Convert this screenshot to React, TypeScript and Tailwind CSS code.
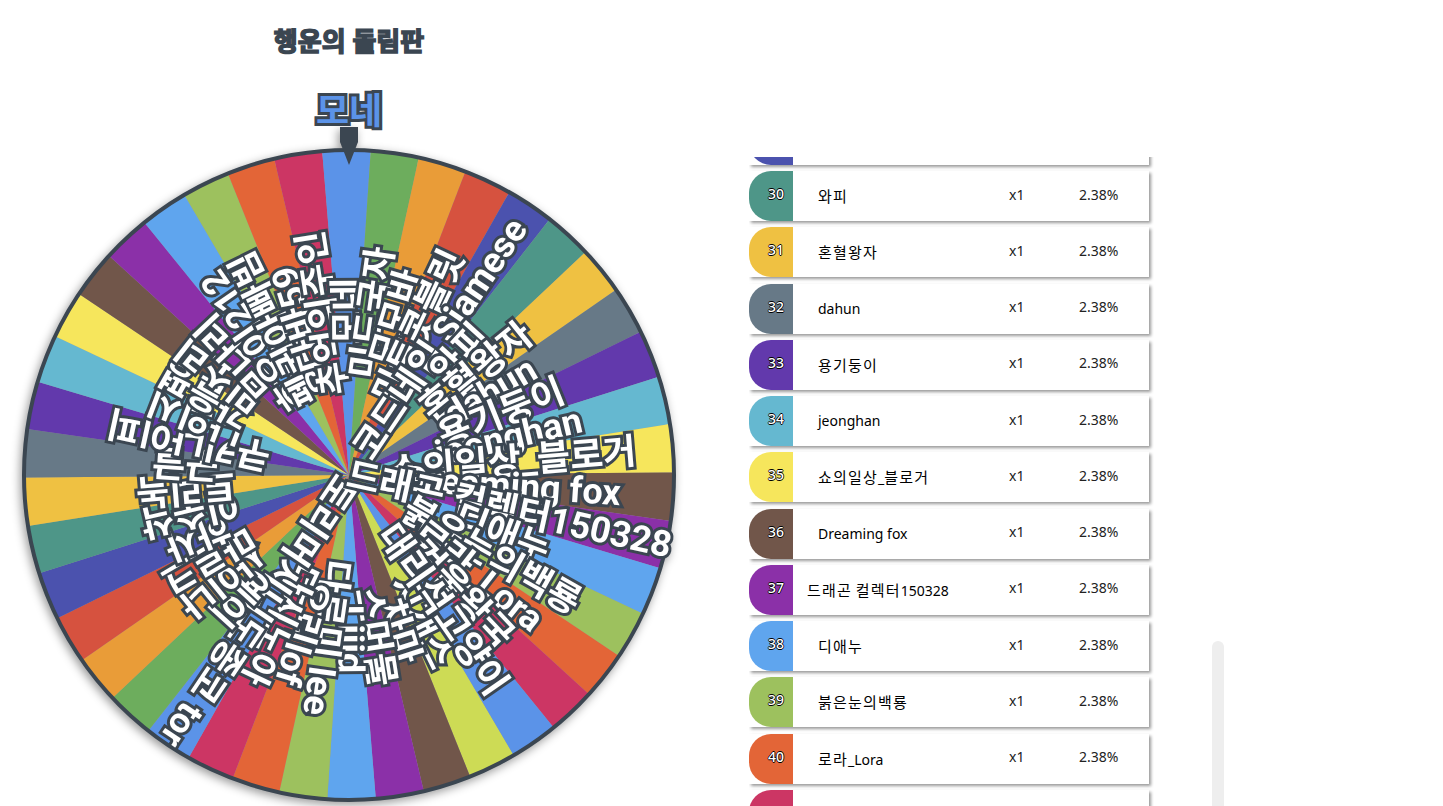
import type { ReactNode } from 'react'

// 42 slices, index 0 is entry #1. Name list doubles as the wheel labels.
const ENTRIES: { name: string; color: string }[] = [
  { name: '지개스', color: '#cddb55' },
  { name: '차마', color: '#71564a' },
  { name: '스머물', color: '#8b30a8' },
  { name: 'Liiid', color: '#5fa5ee' },
  { name: '다르미 lee', color: '#9dc15e' },
  { name: '오리lof', color: '#e36537' },
  { name: '다시노아', color: '#cc3664' },
  { name: '토리머시니도종코 tor', color: '#5b93e8' },
  { name: '예이', color: '#6dad5d' },
  { name: '사이나', color: '#e99c38' },
  { name: '마르크', color: '#d6523f' },
  { name: '하사', color: '#4b52ae' },
  { name: '이수삭', color: '#4e9688' },
  { name: '트리녹', color: '#efc142' },
  { name: '구글', color: '#677987' },
  { name: '쿠키나이피', color: '#6239ac' },
  { name: '나의시', color: '#65b8d0' },
  { name: '가을평', color: '#f6e65c' },
  { name: '민소리', color: '#71564a' },
  { name: '모나리', color: '#8b30a8' },
  { name: '호요이212', color: '#5fa5ee' },
  { name: '펭귄아빠빔', color: '#9dc15e' },
  { name: '다바59', color: '#e36537' },
  { name: '추억의주인', color: '#cc3664' },
  { name: '모네', color: '#5b93e8' },
  { name: '미드국자', color: '#6dad5d' },
  { name: '모모바', color: '#e99c38' },
  { name: '민트콧블릿', color: '#d6523f' },
  { name: '코드네임 Siamese', color: '#4b52ae' },
  { name: '와피', color: '#4e9688' },
  { name: '혼혈왕자', color: '#efc142' },
  { name: 'dahun', color: '#677987' },
  { name: '용기둥이', color: '#6239ac' },
  { name: 'jeonghan', color: '#65b8d0' },
  { name: '쇼의일상_블로거', color: '#f6e65c' },
  { name: 'Dreaming fox', color: '#71564a' },
  { name: '드래곤 컬렉터150328', color: '#8b30a8' },
  { name: '디애누', color: '#5fa5ee' },
  { name: '붉은눈의백룡', color: '#9dc15e' },
  { name: '로라_Lora', color: '#e36537' },
  { name: '겨울왕국', color: '#cc3664' },
  { name: '대리석고양이', color: '#5b93e8' },
]

const CX = 349
const CY = 333
const R = 325
const STEP = 360 / ENTRIES.length
const INK = '#3b4651'

// slice #25 sits under the pointer, nudged a little counter-clockwise
const sliceAngle = (i: number) => -90.45 + (i - 24) * STEP

function polar(angle: number, r: number) {
  const rad = (angle * Math.PI) / 180
  return `${CX + r * Math.cos(rad)} ${CY + r * Math.sin(rad)}`
}

function Wheel() {
  return (
    <svg width={698} height={664} className="block overflow-visible drop-shadow-[-2px_3px_5px_rgba(0,0,0,0.4)]">
      {ENTRIES.map((e, i) => {
        const a = sliceAngle(i)
        return (
          <path
            key={i}
            d={`M${CX} ${CY}L${polar(a - STEP / 2, R)}A${R} ${R} 0 0 1 ${polar(a + STEP / 2, R)}Z`}
            fill={e.color}
          />
        )
      })}
      <circle cx={CX} cy={CY} r={R} fill="none" stroke={INK} strokeWidth={4} />
      {ENTRIES.map((e, i) => (
        <text
          key={i}
          transform={`translate(${CX} ${CY}) rotate(${sliceAngle(i)})`}
          x={164}
          textAnchor="middle"
          dominantBaseline="central"
          fill="#ffffff"
          stroke={INK}
          strokeWidth={6}
          paintOrder="stroke"
          fontSize={36}
          fontWeight={700}
          fontFamily="Roboto, 'Noto Sans CJK KR', sans-serif"
        >
          {e.name}
        </text>
      ))}
      {/* pointer */}
      <polygon points="340,-15 358,-15 358,0 349,23 340,0" fill={INK} />
    </svg>
  )
}

// Hangul runs in the reference are wider than the latin next to them
function splitName(name: string): ReactNode[] {
  return name.split(/([\uac00-\ud7a3]+)/).map((part, i) =>
    /[\uac00-\ud7a3]/.test(part) ? (
      <span key={i} className="text-[15px] tracking-[1.2px]">
        {part}
      </span>
    ) : (
      <span key={i}>{part}</span>
    ),
  )
}

function Row({ no, name, color }: { no: number; name: string; color: string }) {
  return (
    <div className="mb-[6.27px] grid h-[50px] w-[400px] grid-cols-[44px_216px_70px_70px] bg-white text-sm text-[#222] shadow-[2px_2px_3px_#999]">
      <div
        className="rounded-l-[22px] pl-[19px] pt-[13px] font-medium leading-5 text-white [text-shadow:0.7px_0_#000,-0.7px_0_#000,0_0.7px_#000,0_-0.7px_#000]"
        style={{ backgroundColor: color }}
      >
        {no}
      </div>
      <div className={`whitespace-nowrap pt-[15px] leading-5 text-black ${no === 37 ? 'pl-[14px]' : 'pl-[25px]'}`}>
        {splitName(name)}
      </div>
      <div className="pt-[13.5px] leading-5">x1</div>
      <div className="pt-[13.5px] leading-5">2.38%</div>
    </div>
  )
}

export default function App() {
  return (
    <div className="flex h-[806px] w-[1443px] overflow-hidden bg-white font-['Noto_Sans','Noto_Sans_CJK_KR',sans-serif]">
      {/* Wheel column */}
      <div className="flex w-[698px] shrink-0 flex-col items-center">
        <h1 className="mt-6 h-[34px] text-[26px] font-bold leading-[34px] text-[#3b4651] [-webkit-text-stroke:1.5px_#3b4651]">
          행운의 돌림판
        </h1>
        <div className="mt-[29px] h-[55px] text-[36px] font-bold leading-[48px] text-[#5b93e8] [-webkit-text-stroke:6px_#3b4651] [paint-order:stroke]">
          모네
        </div>
        <Wheel />
      </div>

      {/* Result list, scrolled part way down */}
      <div className="relative flex-1 pt-[157px]">
        <div className="ml-[51px] h-[649px] w-[405px] overflow-hidden">
          <div className="-mt-[42.27px]">
            {ENTRIES.slice(28, 41).map((e, i) => (
              <Row key={e.name} no={i + 29} name={e.name} color={e.color} />
            ))}
          </div>
        </div>
        <div className="absolute left-[514px] top-[641px] h-[200px] w-3 rounded-md bg-[#eeeeee]" />
      </div>
    </div>
  )
}
